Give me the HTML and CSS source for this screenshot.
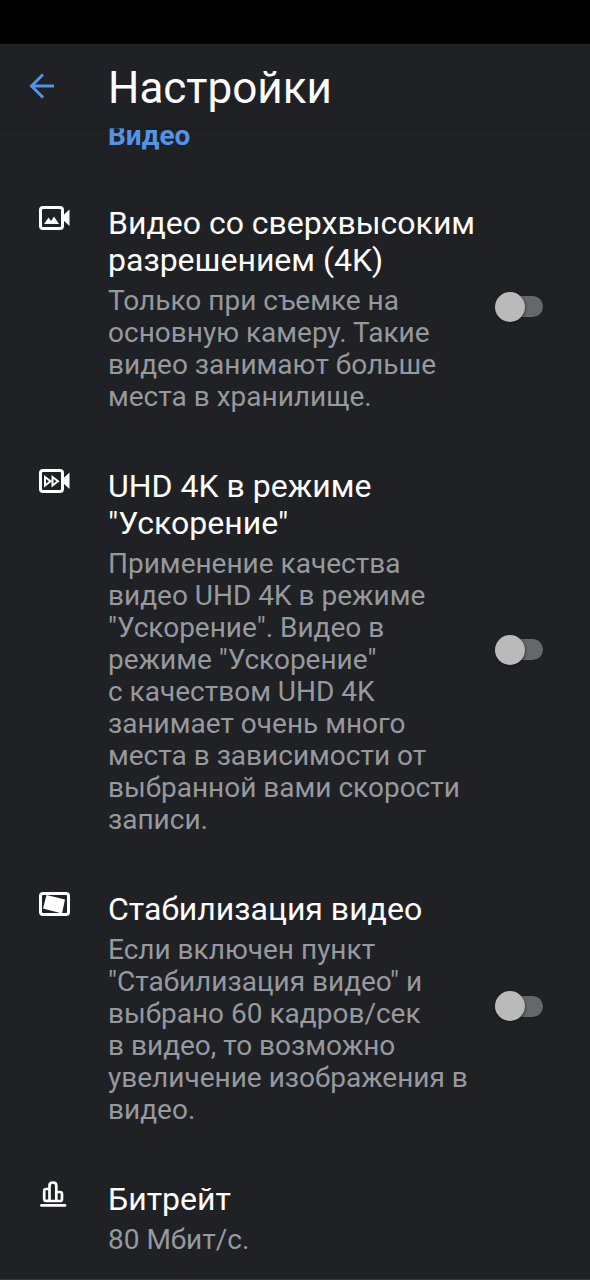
FILE: index.html
```html
<!DOCTYPE html>
<html lang="ru">
<head>
<meta charset="utf-8">
<meta name="viewport" content="width=device-width, initial-scale=1">
<title>Настройки</title>
<link rel="stylesheet" href="styles.css">
</head>
<body>
<div class="status-bar"></div>
<header class="app-bar">
  <button class="back" type="button" aria-label="Назад">
    <svg width="26" height="26" viewBox="0 0 26 26" fill="none" stroke="currentColor" stroke-width="2.9"><path d="M25 13H2.5M14 1.5L2.5 13L14 24.5"/></svg>
  </button>
  <h1 class="title">Настройки</h1>
</header>
<main class="settings">
  <h2 class="section">Видео</h2>
  <div class="row">
    <svg class="icon" viewBox="0 0 32 26" fill="currentColor"><rect x="1.5" y="2.5" width="22" height="21" rx="2.5" fill="none" stroke="currentColor" stroke-width="3"/><path d="M23.5 11L30.5 4.5V21L23.5 14.5ZM5 19L9.5 12.5L12 16L15 11.5L20 19Z"/></svg>
    <div class="text">
      <label class="name" for="uhd">Видео со сверхвысоким разрешением (4K)</label>
      <p class="summary">Только при съемке на основную камеру. Такие видео занимают больше места в хранилище.</p>
    </div>
    <input class="switch" type="checkbox" role="switch" id="uhd">
  </div>
  <div class="row">
    <svg class="icon" viewBox="0 0 32 26" fill="currentColor"><rect x="1.5" y="2.5" width="22" height="21" rx="2.5" fill="none" stroke="currentColor" stroke-width="3"/><path d="M23.5 11L30.5 4.5V21L23.5 14.5Z"/><path d="M6 9V17.5L11.5 13.2ZM13.5 9V17.5L19 13.2Z" fill="none" stroke="currentColor" stroke-width="2"/></svg>
    <div class="text">
      <label class="name" for="lapse">UHD 4K в режиме "Ускорение"</label>
      <p class="summary">Применение качества видео UHD 4K в режиме "Ускорение". Видео в режиме "Ускорение" с&nbsp;качеством UHD 4K занимает очень много места в зависимости от выбранной вами скорости записи.</p>
    </div>
    <input class="switch" type="checkbox" role="switch" id="lapse">
  </div>
  <div class="row">
    <svg class="icon" viewBox="0 0 32 26" fill="currentColor"><rect x="1.5" y="2.5" width="28" height="21" rx="2.5" fill="none" stroke="currentColor" stroke-width="3"/><path d="M7.5 4L26 8.5L23 22.5L4 17.5Z"/></svg>
    <div class="text">
      <label class="name" for="stab">Стабилизация видео</label>
      <p class="summary">Если включен пункт "Стабилизация видео" и выбрано 60&nbsp;кадров/сек в&nbsp;видео, то возможно увеличение изображения в видео.</p>
    </div>
    <input class="switch" type="checkbox" role="switch" id="stab">
  </div>
  <div class="row">
    <svg class="icon" viewBox="0 0 32 26" fill="none" stroke="currentColor" stroke-width="2.7"><path d="M10.5 19.8H7Q5.2 19.8 5.2 18V10Q5.2 8 7 8H10.5M10.5 20V4.5Q10.5 1.5 14 1.5Q17.3 1.5 17.3 4.5V20ZM17.3 11H21Q23 11 23 13V18Q23 20 21 20H17.3"/><path d="M2.5 24.4H26" stroke-linecap="round"/></svg>
    <div class="text">
      <h3 class="name">Битрейт</h3>
      <p class="summary">80 Мбит/с.</p>
    </div>
  </div>
</main>
</body>
</html>
```
FILE: styles.css
```css
* {
  box-sizing: border-box;
}

body {
  margin: 0;
  background: #202125;
  color: #fff;
  font-family: Roboto, "Noto Sans", sans-serif;
}

.status-bar {
  height: 44px;
  background: #000;
}

.app-bar {
  position: relative;
  z-index: 1;
  display: flex;
  align-items: center;
  gap: 53px;
  height: 84px;
  padding: 0 29px;
  background: #202125;
  box-shadow: 0 0 2px #17181b;
}

.back {
  display: flex;
  padding: 0;
  border: 0;
  background: none;
  color: #5494e8;
}

.title {
  margin: 0;
  padding-top: 4px;
  font-size: 44px;
  font-weight: 400;
  line-height: 52px;
}

.section {
  margin: -8px 0 26px;
  padding: 0 108px;
  color: #5494e8;
  font-size: 28px;
  font-weight: 700;
  line-height: 32px;
}

.settings {
  border-bottom: 1px solid #38393c;
}

.row {
  display: flex;
  align-items: center;
  padding: 27px 47px 28px 39px;
}

.row:last-child {
  padding-bottom: 23px;
}

.icon {
  flex: none;
  align-self: flex-start;
  width: 32px;
  height: 26px;
}

.text {
  flex: 1;
  display: flex;
  flex-direction: column;
  gap: 6px;
  padding: 0 12px 0 37px;
}

.name {
  margin: 0;
  font-size: 32px;
  font-weight: 400;
  line-height: 37px;
}

.summary {
  margin: 0;
  color: #96999e;
  font-size: 28px;
  line-height: 32px;
}

.switch {
  appearance: none;
  flex: none;
  display: flex;
  align-items: center;
  width: 48px;
  height: 21px;
  margin: 0 0 5px;
  border-radius: 11px;
  background: #66676a;
}

.switch::before {
  content: "";
  flex: none;
  width: 30px;
  height: 30px;
  border-radius: 50%;
  background: #bababa;
  box-shadow: 0 1px 3px #18191c;
}

.switch:checked::before {
  margin-left: auto;
  background: #5494e8;
}
```
